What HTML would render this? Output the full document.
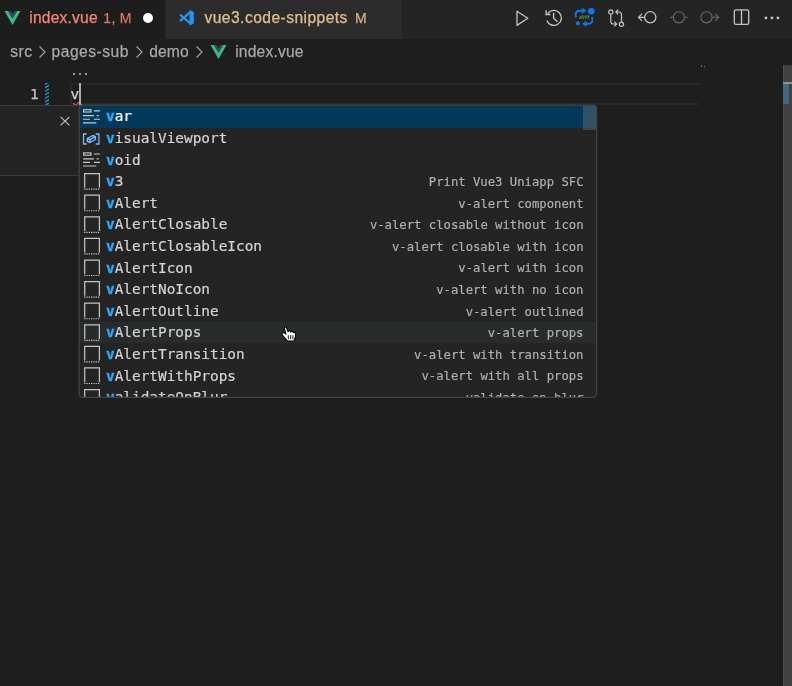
<!DOCTYPE html>
<html><head><meta charset="utf-8"><title>index.vue</title>
<style>
*{box-sizing:border-box;margin:0;padding:0}
html,body{width:792px;height:686px;overflow:hidden;background:#1e1e1e}
body{position:relative;font-family:"Liberation Sans",sans-serif;font-size:15.6px;color:#ccc}
.abs{position:absolute}
#tabs{left:0;top:0;width:792px;height:39px;background:#252526}
#tab1{left:0;top:0;width:165px;height:39px;background:#1e1e1e}
#tab2{left:166px;top:0;width:236px;height:39px;background:#2d2d2d}
.t{position:absolute;white-space:pre;line-height:20px;height:20px;-webkit-text-stroke:.25px currentColor}
.mono{font-family:"DejaVu Sans Mono","Liberation Mono",monospace;font-size:14.4px}
#hl{left:70px;top:83px;width:630px;height:22px;border:2px solid #282828;border-right:0}
#cursor{left:78.600px;top:83px;width:2px;height:22px;background:#aeafad}
#side{left:-2px;top:104.600px;width:82px;height:71.600px;background:#252526;border:1px solid #3c3c3c}
#sugg{left:79px;top:105px;width:518px;height:292.600px;background:#252526;border-radius:4px;overflow:hidden}
.row{position:absolute;left:0;width:517px;height:21.6px}
.row.sel{background:#04395e;height:22px}
.row.hov{background:#2a2d2e}
.row .lab{position:absolute;left:27px;top:.8px;-webkit-text-stroke:.2px currentColor;line-height:21.6px;color:#d4d4d4;white-space:pre}
.row.sel .lab{color:#fff}
.row .lab b{color:#2aaaff;font-weight:bold;-webkit-text-stroke:.35px #2aaaff}
.row .det{position:absolute;right:12.500px;top:1.700px;-webkit-text-stroke:.15px currentColor;line-height:21.6px;color:#d4d4d4;opacity:.8;white-space:pre;font-size:12.24px}
#slider{left:504.100px;top:0;width:12.900px;height:25px;background:rgba(121,121,121,.4)}
#vs{left:783px;top:65px;width:9px;height:621px;background:#424242;border-left:1px solid #4f4f4f}
</style></head><body><div id="root" style="position:absolute;left:0;top:0;width:792px;height:686px;will-change:transform;opacity:.999">
<div id="tabs" class="abs"></div>
<div id="tab1" class="abs"></div>
<div id="tab2" class="abs"></div>

<!-- tab 1 -->
<svg class="abs" style="left:4px;top:10px" width="17" height="16" viewBox="0 0 17 16"><path d="M0.5 1H4L8.5 8.6L13 1H16.5L8.5 15Z" fill="#41b883"/><path d="M4 1H6.8L8.5 4L10.2 1H13L8.5 8.6Z" fill="#35495e"/></svg>
<div class="t" style="left:29.3px;top:8.4px;color:#f48771;letter-spacing:.2px">index.vue</div>
<div class="t" style="left:103.3px;top:7.6px;color:#f48771;font-size:14px;opacity:.85;letter-spacing:.3px">1, M</div>
<div class="abs" style="left:143px;top:13px;width:10px;height:10px;border-radius:50%;background:#fff"></div>

<!-- tab 2 -->
<svg class="abs" style="left:179.300px;top:10px" width="15.300" height="15.600" viewBox="0 0 16 16" preserveAspectRatio="none"><path d="M11.300 0.500L15.300 2.300V13.700L11.300 15.500Z" fill="#2496ed" stroke="#2496ed" stroke-width=".6" stroke-linejoin="round"/><path d="M12 2L1.800 10.700M12 14L1.800 5.300" fill="none" stroke="#2496ed" stroke-width="2.300" stroke-linecap="round"/></svg>
<div class="t" style="left:204.5px;top:8.4px;color:#e2c08d;letter-spacing:.45px">vue3.code-snippets</div>
<div class="t" style="left:355px;top:7.6px;color:#e2c08d;font-size:14px;opacity:.9">M</div>

<!-- breadcrumbs -->
<div class="t" id="bc1" style="left:10.2px;top:41.5px;color:#a9a9a9;letter-spacing:.5px">src</div>
<div class="t" id="bc2" style="left:51.6px;top:41.5px;color:#a9a9a9;letter-spacing:.5px">pages-sub</div>
<div class="t" id="bc3" style="left:149.3px;top:41.5px;color:#a9a9a9;letter-spacing:.1px">demo</div>
<div class="t" id="bc4" style="left:235.2px;top:41.5px;color:#a9a9a9;letter-spacing:.2px">index.vue</div>
<svg class="abs" style="left:36px;top:45px" width="12" height="14" viewBox="0 0 12 14"><path d="M3.5 1.5L9 7L3.5 12.5" fill="none" stroke="#a0a0a0" stroke-width="1.2"/></svg>
<svg class="abs" style="left:132.5px;top:45px" width="12" height="14" viewBox="0 0 12 14"><path d="M3.5 1.5L9 7L3.5 12.5" fill="none" stroke="#a0a0a0" stroke-width="1.2"/></svg>
<svg class="abs" style="left:193px;top:45px" width="12" height="14" viewBox="0 0 12 14"><path d="M3.5 1.5L9 7L3.5 12.5" fill="none" stroke="#a0a0a0" stroke-width="1.2"/></svg>
<svg class="abs" style="left:209.800px;top:44px" width="17" height="16" viewBox="0 0 17 16"><path d="M0.5 1H4L8.5 8.6L13 1H16.5L8.5 15Z" fill="#41b883"/><path d="M4 1H6.8L8.5 4L10.2 1H13L8.5 8.6Z" fill="#35495e"/></svg>

<!-- editor actions -->
<svg class="abs" style="left:510px;top:6px" width="282" height="26" viewBox="0 0 282 26" fill="none" stroke="#c5c5c5" stroke-width="1.3">
<path d="M7 5.2V19.4L17.8 12.3Z" stroke-linejoin="round"/>
<path d="M37.760 7.600A7.500 7.500 0 1 1 36.850 14.470M36.100 4.200V8.500H40.400M43.600 6.800V12L47.500 15.800" stroke-width="1.350"/>
<g stroke="#0f78f0" stroke-width="1.900"><path d="M65.700 11.400V8.300A3.600 3.600 0 0 1 69.300 4.700H73M82.300 11V14.200A3.600 3.600 0 0 1 78.700 17.800H75.500"/></g>
<path d="M72.500 2.200L76.100 4.700L72.500 7.300ZM76.100 15.200L72.500 17.800L76.100 20.500Z" fill="#0f78f0" stroke="#0f78f0" stroke-width=".5" stroke-linejoin="round"/>
<circle cx="81.300" cy="5.300" r="3.300" fill="#0f78f0" stroke="none"/><circle cx="67.900" cy="17.200" r="2" fill="#0f78f0" stroke="none"/>
<path d="M100.800 8.200V15.500A2.500 2.500 0 0 0 103.300 18H106.500M104.300 15.600L106.700 18L104.300 20.400M111.500 15.800V8.500A2.500 2.500 0 0 0 109 6H106M108.200 3.600L105.800 6L108.200 8.400" stroke-width="1.200"/><circle cx="100.800" cy="6" r="2.100" stroke-width="1.200"/><circle cx="111.500" cy="18.200" r="2.100" stroke-width="1.200"/>
<circle cx="140.300" cy="11.300" r="5.600"/><path d="M134.500 11.300H128.600M132 7.800L128.500 11.300L132 14.800" stroke-width="1.200"/>
<g stroke="#6a6a6a" stroke-width="1.100"><circle cx="168.900" cy="11.300" r="5.600"/><path d="M160 11.300H163.300M174.500 11.300H177.800"/>
<circle cx="196.500" cy="11.300" r="5.600"/><path d="M202.200 11.300H208.600M205.200 7.800L208.700 11.300L205.200 14.800"/></g>
<rect x="224.300" y="3.800" width="14.400" height="14.600" rx="1.600"/><path d="M231.500 3.800V18.400"/>
<g fill="#c5c5c5" stroke="none"><rect x="254.700" y="10.700" width="2.500" height="2.500"/><rect x="260.700" y="10.700" width="2.500" height="2.500"/><rect x="266.700" y="10.700" width="2.500" height="2.500"/></g>
</svg>
<div class="t" style="left:579.200px;top:10.300px;-webkit-text-stroke:0;color:#5fa832;font-size:5.600px;font-weight:bold;font-style:italic;line-height:14px;height:14px;letter-spacing:.45px">diff</div>

<!-- editor -->
<div class="abs" style="left:72.500px;top:72.500px;width:2.400px;height:2.400px;background:#9a9a9a"></div>
<div class="abs" style="left:78.500px;top:72.500px;width:2.400px;height:2.400px;background:#9a9a9a"></div>
<div class="abs" style="left:84.600px;top:72.500px;width:2.400px;height:2.400px;background:#9a9a9a"></div>
<div class="abs" style="left:701px;top:65.300px;width:1.300px;height:2px;background:#1b81a8"></div>
<div class="abs" style="left:703.500px;top:66px;width:1px;height:1px;background:#777"></div>

<div id="hl" class="abs"></div>
<div class="t mono" style="left:30px;top:83.800px;line-height:21.600px;color:#c6c6c6">1</div>
<svg class="abs" style="left:44.700px;top:82.800px" width="4.400" height="22.100" viewBox="0 0 4.400 22.100"><path d="M-1 1.50L5.4 -1.70M-1 5.04L5.4 1.84M-1 8.58L5.4 5.38M-1 12.12L5.4 8.92M-1 15.66L5.4 12.46M-1 19.20L5.4 16.00M-1 22.74L5.4 19.54M-1 26.28L5.4 23.08" stroke="#1c86b0" stroke-width="1.700" fill="none"/></svg>
<div class="t mono" style="left:70.400px;top:83.800px;line-height:21.600px;color:#d4d4d4">v</div>
<svg class="abs" style="left:72px;top:101px" width="12" height="5" viewBox="0 0 12 5"><path d="M1 2L3.500 4.300L7 1L10 4" fill="none" stroke="#f14c4c" stroke-width="1.100"/></svg>
<div id="cursor" class="abs"></div>

<div id="side" class="abs"></div>
<svg class="abs" style="left:59px;top:115px" width="12" height="12" viewBox="0 0 12 12"><path d="M1.600 1.800L10.400 10.400M10.400 1.800L1.600 10.400" fill="none" stroke="#c5c5c5" stroke-width="1.100"/></svg>

<div id="sugg" class="abs mono">
<div class="row sel" style="top:0.6px"><span class="lab"><b>v</b>ar</span><span class="det"></span></div>
<div class="row" style="top:22.2px"><span class="lab"><b>v</b>isualViewport</span><span class="det"></span></div>
<div class="row" style="top:43.8px"><span class="lab"><b>v</b>oid</span><span class="det"></span></div>
<div class="row" style="top:65.4px"><span class="lab"><b>v</b>3</span><span class="det">Print Vue3 Uniapp SFC</span></div>
<div class="row" style="top:87.0px"><span class="lab"><b>v</b>Alert</span><span class="det">v-alert component</span></div>
<div class="row" style="top:108.6px"><span class="lab"><b>v</b>AlertClosable</span><span class="det">v-alert closable without icon</span></div>
<div class="row" style="top:130.2px"><span class="lab"><b>v</b>AlertClosableIcon</span><span class="det">v-alert closable with icon</span></div>
<div class="row" style="top:151.8px"><span class="lab"><b>v</b>AlertIcon</span><span class="det">v-alert with icon</span></div>
<div class="row" style="top:173.4px"><span class="lab"><b>v</b>AlertNoIcon</span><span class="det">v-alert with no icon</span></div>
<div class="row" style="top:195.0px"><span class="lab"><b>v</b>AlertOutline</span><span class="det">v-alert outlined</span></div>
<div class="row hov" style="top:216.6px"><span class="lab"><b>v</b>AlertProps</span><span class="det">v-alert props</span></div>
<div class="row" style="top:238.2px"><span class="lab"><b>v</b>AlertTransition</span><span class="det">v-alert with transition</span></div>
<div class="row" style="top:259.8px"><span class="lab"><b>v</b>AlertWithProps</span><span class="det">v-alert with all props</span></div>
<div class="row" style="top:281.4px"><span class="lab"><b>v</b>alidateOnBlur</span><span class="det">validate on blur</span></div>
<svg class="abs" style="left:0;top:0" width="40" height="292" viewBox="0 0 40 292"><g transform="translate(0 0.6)"><g fill="none" stroke="#c8c8c8" stroke-width="1.150"><rect x="4.600" y="4.100" width="7.400" height="2.300"/><path d="M14.900 5.200H21M4 10H14.900M17.700 10H19.700M4 13.600H11M14.900 13.600H21M4 17.200H17.300"/></g></g><g transform="translate(0 22.2)"><g fill="none" stroke="#75beff" stroke-width="1.300"><path d="M7.700 6.800H4.500V16.800H7.700M16.700 6.800H19.900V16.800H16.700"/><path d="M8.300 11.300L13.800 8.300L16.400 9.500V12.300L10.900 15.300L8.300 14.100ZM8.300 11.300L10.900 12.500V15.300M10.900 12.500L16.400 9.500" stroke-width="1.400" stroke-linejoin="round"/></g></g><g transform="translate(0 43.8)"><g fill="none" stroke="#c8c8c8" stroke-width="1.150"><rect x="4.600" y="4.100" width="7.400" height="2.300"/><path d="M14.900 5.200H21M4 10H14.900M17.700 10H19.700M4 13.600H11M14.900 13.600H21M4 17.200H17.300"/></g></g><g transform="translate(0 65.4)"><g fill="none" stroke="#c5c5c5" stroke-width="1.250"><path d="M5.700 17.400V3.200H20.400V17.400"/><path d="M5.100 18.700H21" stroke-dasharray="1.300 1" stroke-width="1.150"/></g></g><g transform="translate(0 87.0)"><g fill="none" stroke="#c5c5c5" stroke-width="1.250"><path d="M5.700 17.400V3.200H20.400V17.400"/><path d="M5.100 18.700H21" stroke-dasharray="1.300 1" stroke-width="1.150"/></g></g><g transform="translate(0 108.6)"><g fill="none" stroke="#c5c5c5" stroke-width="1.250"><path d="M5.700 17.400V3.200H20.400V17.400"/><path d="M5.100 18.700H21" stroke-dasharray="1.300 1" stroke-width="1.150"/></g></g><g transform="translate(0 130.2)"><g fill="none" stroke="#c5c5c5" stroke-width="1.250"><path d="M5.700 17.400V3.200H20.400V17.400"/><path d="M5.100 18.700H21" stroke-dasharray="1.300 1" stroke-width="1.150"/></g></g><g transform="translate(0 151.8)"><g fill="none" stroke="#c5c5c5" stroke-width="1.250"><path d="M5.700 17.400V3.200H20.400V17.400"/><path d="M5.100 18.700H21" stroke-dasharray="1.300 1" stroke-width="1.150"/></g></g><g transform="translate(0 173.4)"><g fill="none" stroke="#c5c5c5" stroke-width="1.250"><path d="M5.700 17.400V3.200H20.400V17.400"/><path d="M5.100 18.700H21" stroke-dasharray="1.300 1" stroke-width="1.150"/></g></g><g transform="translate(0 195.0)"><g fill="none" stroke="#c5c5c5" stroke-width="1.250"><path d="M5.700 17.400V3.200H20.400V17.400"/><path d="M5.100 18.700H21" stroke-dasharray="1.300 1" stroke-width="1.150"/></g></g><g transform="translate(0 216.6)"><g fill="none" stroke="#c5c5c5" stroke-width="1.250"><path d="M5.700 17.400V3.200H20.400V17.400"/><path d="M5.100 18.700H21" stroke-dasharray="1.300 1" stroke-width="1.150"/></g></g><g transform="translate(0 238.2)"><g fill="none" stroke="#c5c5c5" stroke-width="1.250"><path d="M5.700 17.400V3.200H20.400V17.400"/><path d="M5.100 18.700H21" stroke-dasharray="1.300 1" stroke-width="1.150"/></g></g><g transform="translate(0 259.8)"><g fill="none" stroke="#c5c5c5" stroke-width="1.250"><path d="M5.700 17.400V3.200H20.400V17.400"/><path d="M5.100 18.700H21" stroke-dasharray="1.300 1" stroke-width="1.150"/></g></g><g transform="translate(0 281.4)"><g fill="none" stroke="#c5c5c5" stroke-width="1.250"><path d="M5.700 17.400V3.200H20.400V17.400"/><path d="M5.100 18.700H21" stroke-dasharray="1.300 1" stroke-width="1.150"/></g></g></svg>
<div id="slider" class="abs"></div>
</div>

<svg class="abs" style="left:70px;top:100px" width="540" height="310" viewBox="70 100 540 310"><rect x="79.200" y="105.100" width="517.400" height="292.200" rx="3.500" fill="none" stroke="#454545" stroke-width="1.200"/></svg>
<!-- mouse pointer -->
<svg class="abs" style="left:280px;top:324px" width="18" height="20" viewBox="0 0 18 20"><path d="M2.2 9.3L3.2 8.4L4.3 8.6L5.9 10.2L4.4 4.2L4.6 3.2L5.5 2.7L6.4 3.3L8.1 7.8L8.9 7.0L10.0 7.0L10.7 8.0L11.6 7.4L12.6 7.5L13.2 8.5L14.2 8.2L15.2 8.6L15.6 9.8L15.5 12.5L14.2 16.6L13.8 17.0L7.6 17.0L5.6 14.8L2.4 11.0L1.9 10.1Z" fill="#fff" stroke="#000" stroke-width="1.100" stroke-linejoin="round"/><path d="M8.3 11.2V15.2M10.6 11.2V15.2M12.9 11.2V15.2" stroke="#000" stroke-width=".9" fill="none"/></svg>

<div id="vs" class="abs"></div>
<div class="abs" style="left:783px;top:81.800px;width:9px;height:2.100px;background:#929292"></div>
<div class="abs" style="left:783px;top:83.900px;width:6px;height:20px;background:#42697f"></div>
</div></body></html>
